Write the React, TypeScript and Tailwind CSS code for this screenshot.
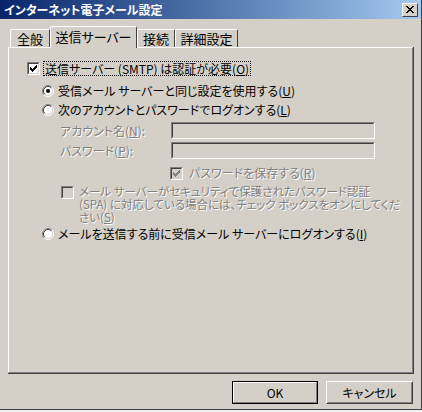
import React from 'react';

const FONT = "font-['Noto_Sans_CJK_JP','Noto_Sans',sans-serif] [font-feature-settings:'palt']";
const DIS = 'text-[#808080] [text-shadow:1px_1px_0_#ffffff]';

function CheckBox({ checked, disabled }: { checked?: boolean; disabled?: boolean }) {
  return (
    <span className="box-border block h-[13px] w-[13px] shrink-0 border border-t-[#808080] border-l-[#808080] border-r-white border-b-white">
      <span
        className={`box-border flex h-full w-full items-center justify-center border border-t-[#404040] border-l-[#404040] border-r-[#d4d0c8] border-b-[#d4d0c8] ${
          disabled ? 'bg-[#d4d0c8]' : 'bg-white'
        }`}
      >
        {checked && (
          <svg width="7" height="7" viewBox="0 0 7 7" shapeRendering="crispEdges">
            <path d="M0 2h1v1h1v1h1V3h1V2h1V1h1V0h1v3H6v1H5v1H4v1H3v1H2V6H1V5H0z" fill={disabled ? '#808080' : '#000'} />
          </svg>
        )}
      </span>
    </span>
  );
}

function Radio({ checked }: { checked?: boolean }) {
  return (
    <svg width="12" height="12" viewBox="0 0 12 12" className="shrink-0">
      <circle cx="6" cy="6" r="5" fill="#fff" />
      <path d="M2.11 9.89A5.5 5.5 0 0 1 9.89 2.11" stroke="#808080" fill="none" />
      <path d="M9.89 2.11A5.5 5.5 0 0 1 2.11 9.89" stroke="#fff" fill="none" />
      <path d="M2.82 9.18A4.5 4.5 0 0 1 9.18 2.82" stroke="#404040" fill="none" />
      <path d="M9.18 2.82A4.5 4.5 0 0 1 2.82 9.18" stroke="#d4d0c8" fill="none" />
      {checked && <circle cx="6" cy="6" r="2" fill="#000" />}
    </svg>
  );
}

function Field() {
  return (
    <div className="box-border h-[17px] w-[204px] border border-t-[#808080] border-l-[#808080] border-r-white border-b-white">
      <div className="box-border h-full w-full border border-t-[#404040] border-l-[#404040] border-r-[#d4d0c8] border-b-[#d4d0c8] bg-[#d4d0c8]" />
    </div>
  );
}

function Tab({ label, width, active }: { label: string; width: string; active?: boolean }) {
  if (active) {
    return (
      <div className={`relative z-10 -mb-px box-border flex h-[22px] ${width} items-start justify-center rounded-t-[2px] border-l border-t border-r border-l-white border-t-white border-r-[#404040] bg-[#d4d0c8] pt-[1px]`}>
        <span className="text-[13px] leading-[18px]">{label}</span>
      </div>
    );
  }
  return (
    <div className={`box-border flex h-[18px] ${width} items-start justify-center rounded-t-[2px] border-l border-t border-r border-l-white border-t-white border-r-[#404040] pt-[1px]`}>
      <span className="text-[13px] leading-[16px]">{label}</span>
    </div>
  );
}

export default function App() {
  return (
    <div className={`h-[412px] w-[422px] overflow-hidden bg-[#f0f0f0] ${FONT} text-[12px] text-black`}>
      <div className="box-border flex h-[410px] w-[422px] flex-col border-r border-b border-r-[#404040] border-b-[#404040] bg-[#d4d0c8]">
        {/* title bar */}
        <div className="flex h-[19px] items-center justify-between bg-gradient-to-r from-[#0a246a] to-[#a6caf0] pl-[4px] pr-[3px]">
          <span className="text-[12px] font-bold leading-none text-white">インターネット電子メール設定</span>
          <div className="box-border flex h-[14px] w-[16px] items-center justify-center border border-t-white border-l-white border-r-[#404040] border-b-[#404040] bg-[#d4d0c8]">
            <svg width="8" height="7" viewBox="0 0 8 7" shapeRendering="crispEdges">
              <path d="M0 0h2v1h1v1h2V1h1V0h2v1H7v1H6v1H5v1h1v1h1v1h1v1H6V6H5V5H3v1H2v1H0V6h1V5h1V4h1V3H2V2H1V1H0z" fill="#000" />
            </svg>
          </div>
        </div>

        {/* tabs */}
        <div className="mt-[7px] flex h-[21px] items-end pl-[10px]">
          <Tab label="全般" width="w-[40px]" />
          <Tab label="送信サーバー" width="w-[87px]" active />
          <Tab label="接続" width="w-[38px]" />
          <Tab label="詳細設定" width="w-[63px]" />
        </div>

        {/* panel */}
        <div className="ml-[8px] box-border h-[327px] w-[406px] border-r border-b border-r-[#404040] border-b-[#404040]">
          <div className="box-border flex h-full w-full flex-col border border-t-white border-l-white border-r-[#808080] border-b-[#808080] pt-[12px]">
            <div className="flex h-[16px] items-center pl-[18px]">
              <CheckBox checked />
              <span className="ml-[3px] border border-dotted border-black px-[1px] leading-[13px]">
                送信サーバー (SMTP) は認証が必要(<u>O</u>)
              </span>
            </div>

            <div className="mt-[7px] flex h-[16px] items-center pl-[33px]">
              <Radio checked />
              <span className="ml-[4px]">受信メール サーバーと同じ設定を使用する(<u>U</u>)</span>
            </div>

            <div className="mt-[3px] flex h-[16px] items-center pl-[33px]">
              <Radio />
              <span className="ml-[4px]">次のアカウントとパスワードでログオンする(<u>L</u>)</span>
            </div>

            <div className="mt-[4px] flex h-[17px] items-center pl-[51px]">
              <span className={`w-[111px] ${DIS}`}>アカウント名(<u>N</u>):</span>
              <Field />
            </div>

            <div className="mt-[3px] flex h-[17px] items-center pl-[51px]">
              <span className={`w-[111px] ${DIS}`}>パスワード(<u>P</u>):</span>
              <Field />
            </div>

            <div className="mt-[6px] flex h-[16px] items-center pl-[161px]">
              <CheckBox checked disabled />
              <span className={`ml-[6px] ${DIS}`}>パスワードを保存する(<u>R</u>)</span>
            </div>

            <div className="mt-[4px] flex items-start pl-[52px]">
              <div className="mt-[1px]">
                <CheckBox disabled />
              </div>
              <div className={`ml-[5px] flex flex-col whitespace-nowrap text-[11.5px] leading-[13px] ${DIS}`}>
                <div className="h-[13px]">メール サーバーがセキュリティで保護されたパスワード認証</div>
                <div className="h-[13px]">(SPA) に対応している場合には、チェック ボックスをオンにしてくだ</div>
                <div className="h-[13px]">
                  さい(<u>S</u>)
                </div>
              </div>
            </div>

            <div className="mt-[2px] flex h-[16px] items-center pl-[33px]">
              <Radio />
              <span className="ml-[4px]">メールを送信する前に受信メール サーバーにログオンする(<u>I</u>)</span>
            </div>
          </div>
        </div>

        {/* buttons */}
        <div className="mt-[7px] flex justify-end gap-[8px] pr-[8px]">
          <button className="box-border h-[23px] w-[86px] border border-black bg-[#d4d0c8] p-0">
            <span className="box-border flex h-full w-full items-center justify-center border border-t-white border-l-white border-r-[#808080] border-b-[#808080]">
              OK
            </span>
          </button>
          <button className="box-border h-[23px] w-[87px] border border-t-white border-l-white border-r-[#404040] border-b-[#404040] bg-[#d4d0c8] p-0">
            <span className="box-border flex h-full w-full items-center justify-center border border-t-[#d4d0c8] border-l-[#d4d0c8] border-r-[#808080] border-b-[#808080]">
              キャンセル
            </span>
          </button>
        </div>
      </div>
    </div>
  );
}
